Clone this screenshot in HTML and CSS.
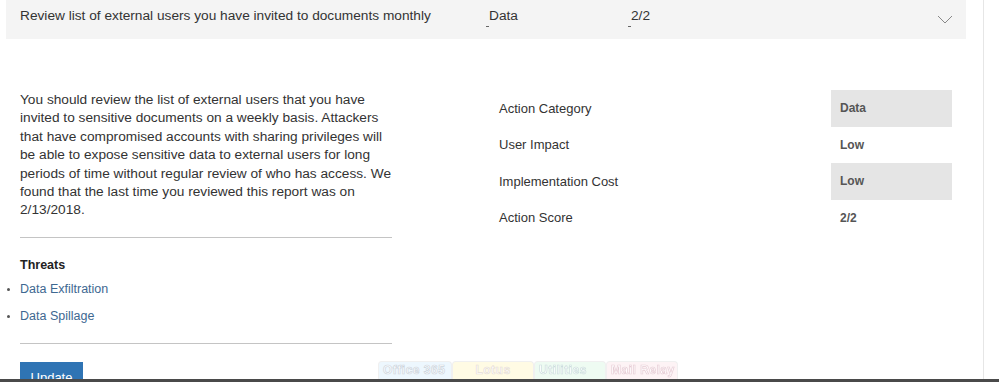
FILE: index.html
```html
<!doctype html>
<html>
  <head>
    <meta charset="utf-8">
    <title>Secure Score Action</title>
    <link rel="stylesheet" href="styles.css">
  </head>
  <body>
    <div class="page">
      <div class="action-head">
        <div class="head-title">Review list of external users you have invited to documents monthly</div>
        <div class="head-cat"><span class="tick"></span>Data</div>
        <div class="head-score"><span class="tick"></span>2/2</div>
        <svg class="chevron" width="16" height="9" viewBox="0 0 16 9"><path d="M1 1 L8 8 L15 1" fill="none" stroke="#888" stroke-width="1"/></svg>
      </div>
      <div class="action-body">
        <div class="col-left">
          <p class="desc">You should review the list of external users that you have invited to sensitive documents on a weekly basis. Attackers that have compromised accounts with sharing privileges will be able to expose sensitive data to external users for long periods of time without regular review of who has access. We found that the last time you reviewed this report was on 2/13/2018.</p>
          <hr class="sep">
          <h4 class="threats-title">Threats</h4>
          <ul class="threats">
            <li><a href="#">Data Exfiltration</a></li>
            <li><a href="#">Data Spillage</a></li>
          </ul>
          <hr class="sep sep-low">
          <button class="btn-update">Update</button>
        </div>
        <table class="facts">
          <tr class="shade">
            <td class="fact-label">Action Category</td>
            <td class="fact-value">Data</td>
          </tr>
          <tr>
            <td class="fact-label">User Impact</td>
            <td class="fact-value">Low</td>
          </tr>
          <tr class="shade">
            <td class="fact-label">Implementation Cost</td>
            <td class="fact-value">Low</td>
          </tr>
          <tr>
            <td class="fact-label">Action Score</td>
            <td class="fact-value">2/2</td>
          </tr>
        </table>
      </div>
      <div class="ghost-tabs">
        <span class="gtab gtab-blue">Office 365</span>
        <span class="gtab gtab-yellow">Lotus</span>
        <span class="gtab gtab-green">Utilities</span>
        <span class="gtab gtab-pink">Mail Relay</span>
      </div>
    </div>
    <div class="bottom-edge"></div>
  </body>
</html>
```

FILE: styles.css
```css
html, body {margin:0;padding:0;background:#fff;}
body {font-family:"Liberation Sans", Arial, sans-serif;color:#333;overflow:hidden;}

.page {position:relative;width:984px;height:379px;border-right:1px solid #e6e6e6;box-sizing:border-box;overflow:hidden;}

.action-head {display:flex;align-items:flex-start;margin-left:6px;width:960px;height:39px;background:#f4f4f4;font-size:13.7px;line-height:18px;padding-top:7px;box-sizing:border-box;}
.head-title {width:466px;padding-left:14px;}
.head-cat {width:142px;position:relative;}
.head-score {width:309px;position:relative;}
.tick {display:inline-block;width:3px;height:1px;background:#666;vertical-align:-7px;margin-right:0;}
.chevron {margin-top:8px;}

.action-body {display:flex;padding-top:52px;}
.col-left {width:372px;margin-left:20px;}
.desc {margin:0;font-size:13.7px;line-height:18.4px;}
.sep {border:0;border-top:1px solid #c4c4c4;margin:17px 0 0 0;height:0;}
.sep-low {margin-top:19px;}
.threats-title {margin:20px 0 0 0;font-size:12.5px;line-height:15px;font-weight:bold;color:#222;}
.threats {margin:9px 0 0 0;padding:0;list-style:disc;font-size:12.5px;line-height:15px;}
.threats li {margin-bottom:12px;margin-left:0;color:#555;}
.threats li::marker {font-size:10px;}
.threats a {color:#3e6891;text-decoration:none;}
.btn-update {display:block;margin-top:18px;height:32px;width:63px;background:#2f74b4;border:0;color:#fff;font-family:"Liberation Sans", Arial, sans-serif;font-size:13px;line-height:16px;padding:0;text-align:center;}
.btn-update-label {display:block;}

.facts {border-collapse:collapse;border-spacing:0;margin-left:107px;margin-top:-1px;height:146px;}
.facts td {height:36.5px;padding:0;font-size:13px;}
.fact-label {width:332px;}
.fact-value {width:112px;padding-left:9px !important;font-weight:bold;font-size:12px !important;color:#555;}
.shade .fact-value {background:#e5e5e5;}

.ghost-tabs {position:absolute;left:378px;top:361px;display:flex;opacity:0.5;}
.gtab {display:block;height:18px;padding:1px 4px 0 4px;font-size:12px;line-height:15px;font-weight:bold;white-space:nowrap;overflow:hidden;color:#fff;-webkit-text-stroke:0.7px #9ab;border:1px solid #e0e0e0;border-bottom:0;border-radius:4px 4px 0 0;letter-spacing:0.5px;}
.gtab-blue {background:#dbeefc;width:64px;}
.gtab-yellow {background:#fff6c8;width:72px;text-align:center;-webkit-text-stroke-color:#cba;}
.gtab-green {background:#dcf7e4;width:62px;-webkit-text-stroke-color:#9bb;}
.gtab-pink {background:#fbe6ea;width:62px;-webkit-text-stroke-color:#c9a;}

.bottom-edge {height:3px;background:#4a4a4a;}
```
